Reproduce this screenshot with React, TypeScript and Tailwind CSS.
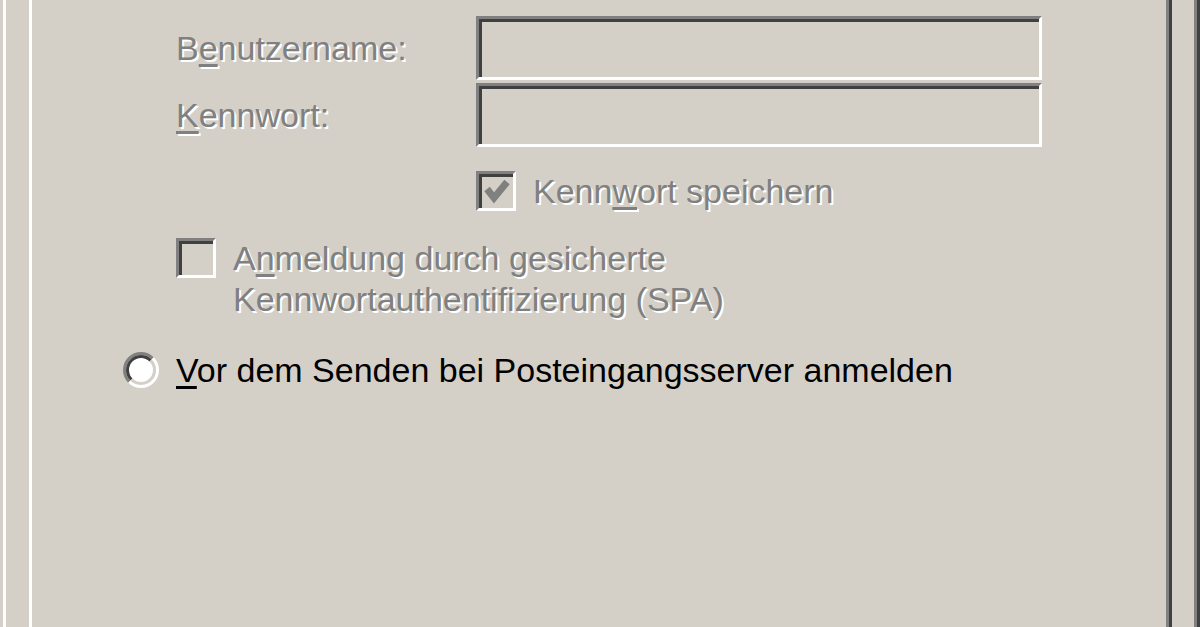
const font = { fontFamily: '"Liberation Sans", Arial, sans-serif' };

function Sunken({ className = "", children }: { className?: string; children?: React.ReactNode }) {
  return (
    <div
      className={`border-[3px] border-t-[#808080] border-l-[#808080] border-r-white border-b-white shadow-[inset_3px_3px_0_#404040] ${className}`}
    >
      {children}
    </div>
  );
}

function Mn({ children }: { children: React.ReactNode }) {
  return <span className="underline decoration-[3px] underline-offset-[4px]">{children}</span>;
}

function CheckBox({ checked }: { checked?: boolean }) {
  return (
    <Sunken className="h-10 w-10 shrink-0 bg-[#d4d0c8]">
      {checked && (
        <svg width="34" height="34" viewBox="0 0 34 34" className="block">
          <polyline points="8,15 15,24 28,8" fill="none" stroke="#808080" strokeWidth="7" />
        </svg>
      )}
    </Sunken>
  );
}

function Radio() {
  return (
    <svg width="36" height="36" viewBox="0 0 36 36" className="block shrink-0">
      <circle cx="18" cy="18" r="15" fill="#ffffff" />
      <path d="M 6.33 29.67 A 16.5 16.5 0 0 1 29.67 6.33" fill="none" stroke="#808080" strokeWidth="3" />
      <path d="M 8.45 27.55 A 13.5 13.5 0 0 1 27.55 8.45" fill="none" stroke="#404040" strokeWidth="3" />
      <path d="M 29.67 6.33 A 16.5 16.5 0 0 1 6.33 29.67" fill="none" stroke="#ffffff" strokeWidth="3" />
      <path d="M 27.55 8.45 A 13.5 13.5 0 0 1 8.45 27.55" fill="none" stroke="#d4d0c8" strokeWidth="3" />
    </svg>
  );
}

const disabled = "text-[#808080] [text-shadow:2px_2px_0_#ffffff]";

export default function App() {
  return (
    <div className="h-[627px] w-[1200px] overflow-hidden bg-[#d4d0c8] pl-[3px]" style={font}>
      <div className="h-full w-[1197px] border-l-[3px] border-r-[3px] border-l-white border-r-[#404040] shadow-[inset_-3px_0_0_#808080]">
        <div className="ml-[23px] h-full w-[1143px] border-l-[3px] border-r-[3px] border-l-white border-r-[#404040] shadow-[inset_-3px_0_0_#808080]">
          <div className="pl-[91px] pt-4 text-[34px] leading-[38px]">
            <div className="pl-[53px]">
              <div className="grid grid-cols-[300px_566px] items-center gap-y-[3px]">
                <div className={disabled}>
                  B<Mn>e</Mn>nutzername:
                </div>
                <Sunken className="h-16 bg-[#d4d0c8]" />
                <div className={disabled}>
                  <Mn>K</Mn>ennwort:
                </div>
                <Sunken className="h-16 bg-[#d4d0c8]" />
              </div>

              <div className="mt-6 flex items-center gap-[17px] pl-[300px]">
                <CheckBox checked />
                <span className={disabled}>
                  Kenn<Mn>w</Mn>ort speichern
                </span>
              </div>

              <div className="mt-[27px] flex items-start gap-[17px]">
                <CheckBox />
                <div className={`${disabled} leading-[41px]`}>
                  A<Mn>n</Mn>meldung durch gesicherte
                  <br />
                  Kennwortauthentifizierung (SPA)
                </div>
              </div>
            </div>

            <div className="mt-[31px] flex items-center gap-[17px]">
              <Radio />
              <span className="text-black">
                <Mn>V</Mn>or dem Senden bei Posteingangsserver anmelden
              </span>
            </div>
          </div>
        </div>
      </div>
    </div>
  );
}
